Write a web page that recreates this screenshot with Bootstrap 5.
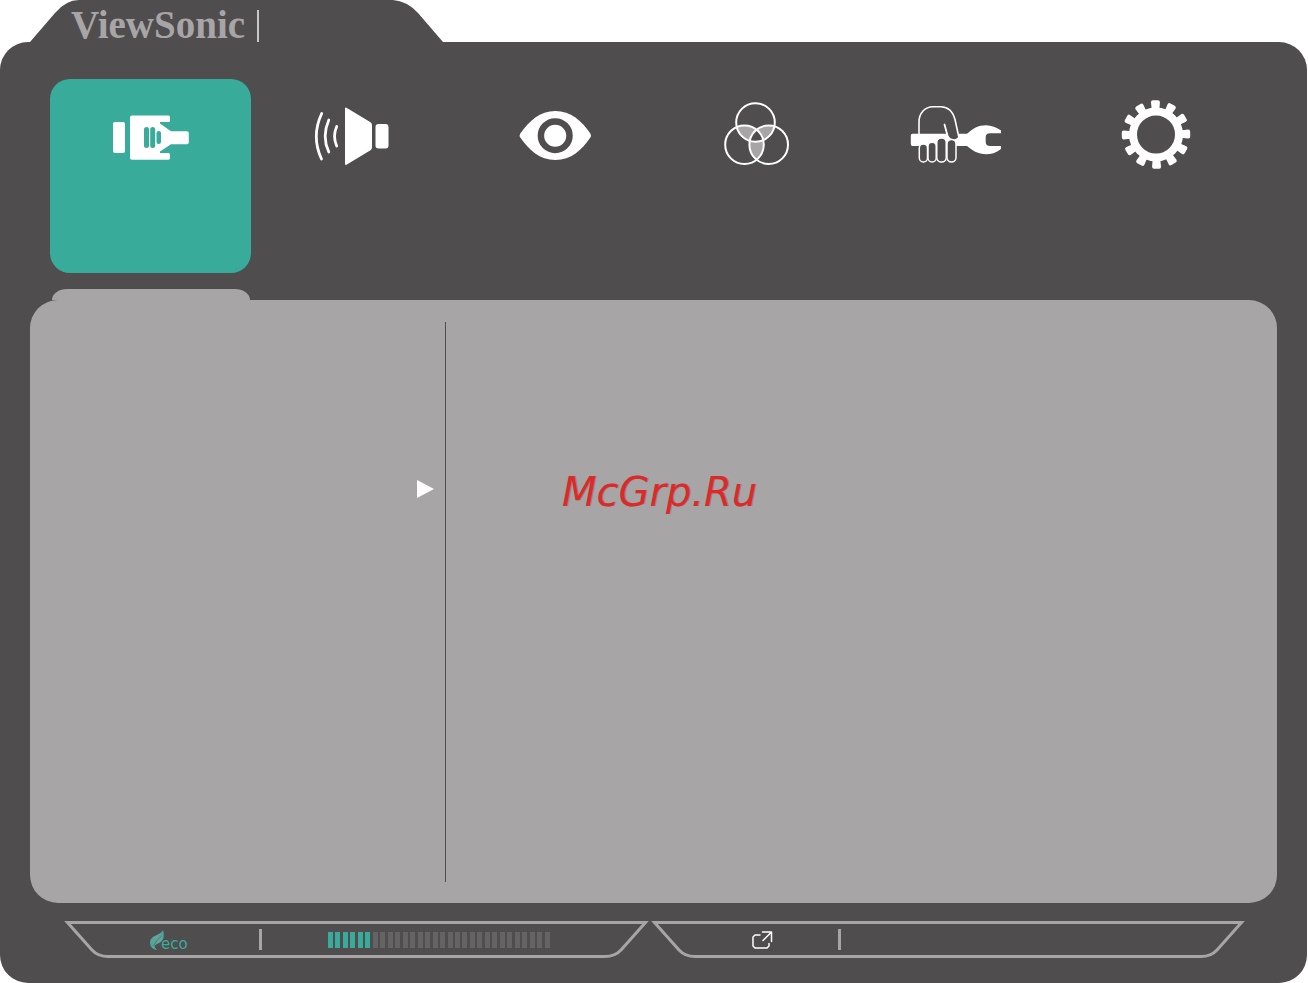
<!DOCTYPE html>
<html lang="en">
<head>
<meta charset="utf-8">
<meta name="viewport" content="width=device-width, initial-scale=1">
<title>ViewSonic</title>
<link href="https://cdn.jsdelivr.net/npm/bootstrap@5.3.0/dist/css/bootstrap.min.css" rel="stylesheet">
<style>
  :root { --osd-dark: #4f4d4e; --osd-grey: #a7a5a6; --osd-teal: #38ab9b; --osd-off: #656364; }
  body { background: #fff; padding-right: 1px; font-family: "Liberation Sans", sans-serif; }
  svg { display: block; flex: none; }
  .osd-head { height: 42px; padding-left: 30px; }
  .osd-head-mid { background: var(--osd-dark); width: 314px; padding: 10px 0 0; }
  .osd-brand { font: bold 39px/30px "Liberation Serif", serif; color: var(--osd-grey); margin-left: -8px; }
  .osd-brand-rule { width: 2px; height: 32px; background: #c9c7c8; margin-left: 12px; }
  .osd-shell { background: var(--osd-dark); border-radius: 28px; padding: 37px 30px 25px; }
  .osd-tabs { margin: 0 20px 16px; }
  .osd-tab { border: 0; background: none; border-radius: 20px; height: 194px; padding: 16px 0; }
  .osd-tab.active { background: var(--osd-teal); }
  .osd-link { width: 198px; height: 11px; margin-left: 22px; background: var(--osd-grey); border-radius: 15px 15px 0 0 / 11px 11px 0 0; }
  .osd-panel { background: var(--osd-grey); border-radius: 28px; padding: 22px 0 21px; }
  .osd-menu { width: 416px; border-right: 1px solid var(--osd-dark); padding: 158px 11px 0 0; }
  .osd-content { padding: 146px 0 0 116px; }
  .osd-mark { font: italic 40px/48px "DejaVu Sans", sans-serif; color: #dd2927; text-shadow: 1px 0 0 rgba(60, 30, 30, .3); }
  .osd-foot { margin: 18px 32px 0 34px; gap: 2px; }
  .osd-bar { height: 37px; min-width: 0; flex: 585 1 0; }
  .osd-bar-wide { flex-grow: 594; }
  .osd-bar-mid { border: solid var(--osd-grey); border-width: 3px 0; margin: 0 -1px; }
  .osd-rule { width: 3px; height: 21px; background: var(--osd-grey); }
  .osd-eco { width: 150px; padding-left: 41px; color: var(--osd-teal); }
  .osd-eco-text { font: 15px/16px "DejaVu Sans", sans-serif; margin: 8px 0 0 -9px; }
  .osd-meter { width: 222px; height: 16px; margin-left: 66px; }
  .osd-seg { width: 5px; background: var(--osd-off); }
  .osd-seg.lit { background: var(--osd-teal); }
  .osd-source { width: 142px; padding-left: 56px; }
</style>
</head>
<body class="d-flex flex-column min-vh-100">

<header class="osd-head d-flex">
  <svg width="49" height="42" fill="#4f4d4e" aria-hidden="true"><path d="M0 42 25 13Q36 0 49 0V42Z"/></svg>
  <div class="osd-head-mid d-flex">
    <span class="osd-brand">ViewSonic</span>
    <span class="osd-brand-rule"></span>
  </div>
  <svg width="50" height="42" fill="#4f4d4e" aria-hidden="true"><path d="M0 0Q14 1 25 13L50 42H0Z"/></svg>
</header>

<main class="osd-shell d-flex flex-column flex-fill">
  <nav class="osd-tabs d-flex" aria-label="Menu">
    <button type="button" class="osd-tab active d-flex flex-fill justify-content-center align-items-start" aria-label="Input">
      <svg width="100" height="80" viewBox="101 95 100 80" fill="#fff">
        <rect x="113" y="122" width="12" height="31" rx="2"/>
        <path d="M132 115.5H168.500Q170 115.500 170 117V120.500Q170 122 168.500 122H160V123.500L171 131.300H187Q188.800 131.300 188.800 133V142.500Q188.800 144.200 187 144.200H171L160 151.500V153H168.500Q170 153 170 154.500V158Q170 159.800 168.500 159.800H132Q130 159.800 130 158V117.500Q130 115.500 132 115.500Z"/>
        <g fill="#38ab9b"><rect x="144" y="127" width="5" height="21" rx="2.500"/><rect x="150.200" y="127" width="5" height="21" rx="2.500"/><rect x="156.500" y="131" width="4.500" height="13" rx="2.200"/></g>
      </svg>
    </button>
    <button type="button" class="osd-tab d-flex flex-fill justify-content-center align-items-start" aria-label="Audio">
      <svg width="100" height="80" viewBox="302 95 100 80" fill="#fff">
        <path d="M345 108.500Q345 106.800 346.500 107.700L370.500 122.300Q372 123.300 372 125V147.500Q372 149.300 370.500 150.200L346.500 164.700Q345 165.500 345 163.800Z"/>
        <rect x="375.500" y="124" width="13" height="24.500" rx="3"/>
        <path d="M321.700 113.500Q311 136.500 321.500 159M328.800 120Q321.500 136.500 328.800 152M336.700 126.500Q332.300 136 336.700 146" fill="none" stroke="#fff" stroke-width="2.800" stroke-linecap="round"/>
      </svg>
    </button>
    <button type="button" class="osd-tab d-flex flex-fill justify-content-center align-items-start" aria-label="View mode">
      <svg width="100" height="80" viewBox="503 95 100 80" fill="#fff">
        <path d="M520.300 133.500C529 121 540 111 555.300 111S582 121 590.300 133.500Q591.500 135.500 590.300 137.500C582 150 571 160 555.300 160S529 150 520.300 137.500Q519 135.500 520.300 133.500Z"/>
        <circle cx="555.200" cy="135.700" r="14.300" fill="none" stroke="#4f4d4e" stroke-width="6.500"/>
      </svg>
    </button>
    <button type="button" class="osd-tab d-flex flex-fill justify-content-center align-items-start" aria-label="Color">
      <svg width="100" height="80" viewBox="704 95 100 80">
        <defs>
          <clipPath id="inTop"><circle cx="755.500" cy="122.500" r="19.500"/></clipPath>
          <clipPath id="inLeft"><circle cx="744.500" cy="144.700" r="19.500"/></clipPath>
        </defs>
        <g fill="#a7a5a6">
          <circle cx="744.500" cy="144.700" r="19.500" clip-path="url(#inTop)"/>
          <circle cx="768.700" cy="144.700" r="19.500" clip-path="url(#inTop)"/>
          <circle cx="768.700" cy="144.700" r="19.500" clip-path="url(#inLeft)"/>
        </g>
        <g clip-path="url(#inTop)"><circle cx="768.700" cy="144.700" r="19.500" fill="#4f4d4e" clip-path="url(#inLeft)"/></g>
        <g fill="none" stroke="#fff" stroke-width="2"><circle cx="755.500" cy="122.500" r="19.300"/><circle cx="744.500" cy="144.700" r="19.300"/><circle cx="768.700" cy="144.700" r="19.300"/></g>
      </svg>
    </button>
    <button type="button" class="osd-tab d-flex flex-fill justify-content-center align-items-start" aria-label="Setup">
      <svg width="100" height="80" viewBox="905 95 100 80">
        <path fill="#fff" d="M912.500 133.800H967C973 128.500 978 125.200 986 125.200Q994 125.500 1001 130.500V133.200H990Q985.700 133.200 985.700 137V142Q985.700 146 990 146H1001V149C996 153 991 154.300 986 154.300C978 154 973 151 967 146H912.500Q910.800 146 910.800 144V135.500Q910.800 133.800 912.500 133.800Z"/>
        <path d="M944.500 124 948 136Q950 140.500 954 139.500Q959 138.500 958.500 134L956 120Z" fill="#4f4d4e"/>
        <g fill="none" stroke="#fff" stroke-width="1.600" stroke-linecap="round">
          <path d="M919 134V122C919 113 925 106.700 933 106.700H941C949 107 953 112 955 119.500L958.600 136"/>
          <path d="M944.500 124.500 947.500 135.500Q949 140 953.500 139.800" stroke-width="1.800"/>
        </g>
        <g fill="#4f4d4e" stroke="#fff" stroke-width="1.500">
          <rect x="919.300" y="144" width="8.200" height="18" rx="4"/><rect x="928" y="142.300" width="8.200" height="19.700" rx="4"/><rect x="936.800" y="138" width="9.400" height="24" rx="4.500"/><rect x="947" y="139.500" width="9" height="22.500" rx="4.500"/>
        </g>
      </svg>
    </button>
    <button type="button" class="osd-tab d-flex flex-fill justify-content-center align-items-start" aria-label="System">
      <svg width="100" height="80" viewBox="-50 -39.500 100 80" fill="#fff">
        <defs><path id="tooth" d="M-3.700-24-4.500-32.300Q-4.500-34.200-2.500-34.200H2.500Q4.500-34.200 4.500-32.300L3.700-24Z"/></defs>
        <circle r="23" fill="none" stroke="#fff" stroke-width="8"/>
        <g transform="rotate(-1)">
          <use href="#tooth"/><use href="#tooth" transform="rotate(30)"/><use href="#tooth" transform="rotate(60)"/><use href="#tooth" transform="rotate(90)"/><use href="#tooth" transform="rotate(120)"/><use href="#tooth" transform="rotate(150)"/><use href="#tooth" transform="rotate(180)"/><use href="#tooth" transform="rotate(210)"/><use href="#tooth" transform="rotate(240)"/><use href="#tooth" transform="rotate(270)"/><use href="#tooth" transform="rotate(300)"/><use href="#tooth" transform="rotate(330)"/>
        </g>
      </svg>
    </button>
  </nav>

  <div class="osd-link"></div>
  <section class="osd-panel d-flex flex-fill">
    <div class="osd-menu d-flex justify-content-end align-items-start">
      <svg width="17" height="18" fill="#fff" aria-hidden="true"><path d="M0 0 17 9 0 18Z"/></svg>
    </div>
    <div class="osd-content"><span class="osd-mark">McGrp.Ru</span></div>
  </section>

  <footer class="osd-foot d-flex">
    <div class="osd-bar d-flex">
      <svg width="46" height="37" fill="none" stroke="#a7a5a6" stroke-width="3" aria-hidden="true"><path d="M46 1.500H3.500L28 29Q34 35.500 44 35.500H46"/></svg>
      <div class="osd-bar-mid d-flex flex-fill align-items-center">
        <div class="osd-eco d-flex align-items-center">
          <svg width="20" height="22" viewBox="0 0 20 22" aria-hidden="true">
            <defs><linearGradient id="leaf" x1="0" y1="1" x2="1" y2="0"><stop stop-color="#38ab9b"/><stop offset=".55" stop-color="#68a399"/><stop offset="1" stop-color="#38ab9b"/></linearGradient></defs>
            <path d="M13 1C14.500 7 14 11 10 13.500Q6 15 4.500 17 5 19.500 7 21C3 20.500 0 18 0 13.500C0 6 10 7 13 1Z" fill="url(#leaf)"/>
            <path d="M3.500 17Q6 11 11.500 7" fill="none" stroke="#4f4d4e" stroke-width=".5"/>
          </svg>
          <span class="osd-eco-text">eco</span>
        </div>
        <span class="osd-rule"></span>
        <div class="osd-meter d-flex justify-content-between" role="meter" aria-label="Lamp" aria-valuemin="0" aria-valuemax="30" aria-valuenow="6">
          <i class="osd-seg lit"></i><i class="osd-seg lit"></i><i class="osd-seg lit"></i><i class="osd-seg lit"></i><i class="osd-seg lit"></i><i class="osd-seg lit"></i><i class="osd-seg"></i><i class="osd-seg"></i><i class="osd-seg"></i><i class="osd-seg"></i><i class="osd-seg"></i><i class="osd-seg"></i><i class="osd-seg"></i><i class="osd-seg"></i><i class="osd-seg"></i><i class="osd-seg"></i><i class="osd-seg"></i><i class="osd-seg"></i><i class="osd-seg"></i><i class="osd-seg"></i><i class="osd-seg"></i><i class="osd-seg"></i><i class="osd-seg"></i><i class="osd-seg"></i><i class="osd-seg"></i><i class="osd-seg"></i><i class="osd-seg"></i><i class="osd-seg"></i><i class="osd-seg"></i><i class="osd-seg"></i>
        </div>
      </div>
      <svg width="46" height="37" fill="none" stroke="#a7a5a6" stroke-width="3" aria-hidden="true"><path d="M0 1.500H42.500L18 29Q12 35.500 2 35.500H0"/></svg>
    </div>
    <div class="osd-bar osd-bar-wide d-flex">
      <svg width="46" height="37" fill="none" stroke="#a7a5a6" stroke-width="3" aria-hidden="true"><path d="M46 1.500H3.500L28 29Q34 35.500 44 35.500H46"/></svg>
      <div class="osd-bar-mid d-flex flex-fill align-items-center">
        <div class="osd-source">
          <svg width="21" height="18" fill="none" stroke="#fff" stroke-width="1.500" stroke-linecap="round" stroke-linejoin="round" aria-hidden="true"><path d="M8 4H3L1 6V15L3 17H15L17 15V12.500M10.500 1H19.500V10.500M19 1.500 11 9.500"/></svg>
        </div>
        <span class="osd-rule"></span>
      </div>
      <svg width="46" height="37" fill="none" stroke="#a7a5a6" stroke-width="3" aria-hidden="true"><path d="M0 1.500H42.500L18 29Q12 35.500 2 35.500H0"/></svg>
    </div>
  </footer>
</main>

<script src="https://cdn.jsdelivr.net/npm/bootstrap@5.3.0/dist/js/bootstrap.bundle.min.js"></script>
</body>
</html>
